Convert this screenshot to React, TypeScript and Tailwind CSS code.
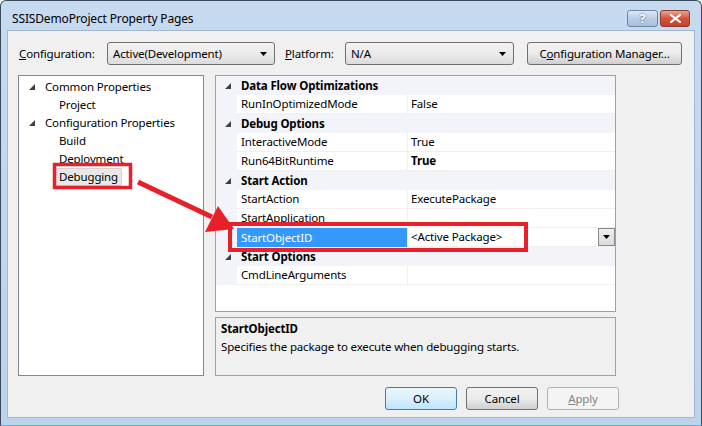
import React from 'react'

type Row =
  | { cat: string }
  | { name: string; value: string; bold?: boolean; selected?: boolean }

const rows: Row[] = [
  { cat: 'Data Flow Optimizations' },
  { name: 'RunInOptimizedMode', value: 'False' },
  { cat: 'Debug Options' },
  { name: 'InteractiveMode', value: 'True' },
  { name: 'Run64BitRuntime', value: 'True', bold: true },
  { cat: 'Start Action' },
  { name: 'StartAction', value: 'ExecutePackage' },
  { name: 'StartApplication', value: '' },
  { name: 'StartObjectID', value: '<Active Package>', selected: true },
  { cat: 'Start Options' },
  { name: 'CmdLineArguments', value: '' },
]

function Expander() {
  return (
    <svg width="6" height="6" viewBox="0 0 6 6" className="shrink-0">
      <path d="M6 0 L6 6 L0 6 Z" fill="#404040" />
    </svg>
  )
}

function DropArrow() {
  return (
    <svg width="7" height="4" viewBox="0 0 7 4">
      <path d="M0 0 L7 0 L3.5 4 Z" fill="#000" />
    </svg>
  )
}

function Combo({ value, width }: { value: string; width: string }) {
  return (
    <div
      className={`${width} h-[23px] flex items-center justify-between pl-[5px] pr-[7px] rounded-[3px] border border-[#707070] bg-gradient-to-b from-[#f2f2f2] via-[#ebebeb] to-[#dcdcdc]`}
    >
      <span>{value}</span>
      <DropArrow />
    </div>
  )
}

function TreeItem({ label, level, expander, selected }: { label: string; level: number; expander?: boolean; selected?: boolean }) {
  return (
    <div className={`h-[18px] flex items-center ${level === 0 ? 'pl-[10px]' : 'pl-[40px]'}`}>
      {level === 0 && (
        <span className="w-[16px] flex items-center">{expander && <Expander />}</span>
      )}
      <span
        className={
          selected
            ? 'px-[3px] -ml-[4px] h-[18px] leading-[16px] bg-[#e8e8e8] border border-[#d2d2d2] rounded-[2px]'
            : ''
        }
      >
        {label}
      </span>
    </div>
  )
}

function PropertyGrid() {
  return (
    <div className="h-[237px] border border-[#a0a0a0] bg-white flex flex-col">
      {rows.map((r, i) =>
        'cat' in r ? (
          <div key={i} className="h-[19px] flex items-center bg-[#f2f4f9]">
            <span className="w-[21px] flex justify-center pl-[2px]">
              <Expander />
            </span>
            <span className="pl-[4px] font-bold">{r.cat}</span>
          </div>
        ) : (
          <div key={i} className="h-[19px] flex">
            <span className="w-[21px] bg-[#f2f4f9]" />
            <span
              className={`w-[171px] pl-[4px] flex items-center border-r border-[#f0f0f0] ${
                r.selected ? 'bg-[#3399ff] text-white' : 'border-b'
              }`}
            >
              {r.name}
            </span>
            <span className="flex-1 flex items-center justify-between pl-[3px] border-b border-[#f0f0f0]">
              <span className={r.bold ? 'font-bold' : ''}>{r.value}</span>
              {r.selected && (
                <span className="w-[17px] h-[18px] flex items-center justify-center border border-[#8a8a8a] bg-gradient-to-b from-[#f0f0f0] to-[#dadada]">
                  <DropArrow />
                </span>
              )}
            </span>
          </div>
        ),
      )}
    </div>
  )
}

function Button({ children, variant }: { children: React.ReactNode; variant?: 'default' | 'disabled' }) {
  const cls =
    variant === 'default'
      ? 'border-[#3c7fb1] bg-gradient-to-b from-[#eaf6fd] via-[#d9f0fc] to-[#bee6fd]'
      : variant === 'disabled'
        ? 'border-[#adb2b5] bg-[#f4f4f4] text-[#838383]'
        : 'border-[#707070] bg-gradient-to-b from-[#f2f2f2] via-[#ebebeb] to-[#cfcfcf]'
  return (
    <div className={`w-[72px] h-[23px] flex items-center justify-center rounded-[3px] border ${cls}`}>
      {children}
    </div>
  )
}

export default function App() {
  return (
    <div className="relative w-[702px] h-[426px] text-[11.5px] tracking-[-0.15px] text-black font-['Noto_Sans',sans-serif] overflow-hidden">
      {/* Window frame */}
      <div className="w-full h-full flex flex-col rounded-t-[6px] border border-[#3a4a5c] bg-gradient-to-b from-[#c6daf0] to-[#bcd3ec] border-b-[#2fc6e0]">
        {/* Title bar */}
        <div className="h-[29px] flex items-start justify-between pl-[11px] pr-[11px]">
          <span className="mt-[10px] leading-[16px] text-[12px]">SSISDemoProject Property Pages</span>
          <div className="flex gap-[2px] mt-[9px]">
            <div className="w-[31px] h-[17px] flex items-center justify-center rounded-[3px] border border-[#6d84a3] bg-gradient-to-b from-[#dfe9f5] via-[#b9cde6] to-[#a8c0de] text-white font-bold text-[12px] leading-none [text-shadow:0_0_2px_#3a4f6e]">
              ?
            </div>
            <div className="w-[30px] h-[17px] flex items-center justify-center rounded-[3px] border border-[#8c3b31] bg-gradient-to-b from-[#e8a493] via-[#d2533c] to-[#c6412b]">
              <svg width="11" height="9" viewBox="0 0 11 9">
                <path d="M1 1 L10 8 M10 1 L1 8" stroke="#fff" strokeWidth="2.2" strokeLinecap="square" />
              </svg>
            </div>
          </div>
        </div>

        {/* Client area */}
        <div className="mx-[6px] h-[388px] border border-[#a3b8d0] bg-[#f0f0f0] px-[10px] flex flex-col">
          {/* Configuration row */}
          <div className="mt-[11px] h-[23px] flex items-center">
            <span className="w-[89px] pl-[1px]">
              <span className="underline">C</span>onfiguration:
            </span>
            <Combo value="Active(Development)" width="w-[168px]" />
            <span className="ml-[10px] w-[60px]">
              <span className="underline">P</span>latform:
            </span>
            <Combo value="N/A" width="w-[169px]" />
            <div className="ml-[13px] w-[155px] h-[23px] flex items-center justify-center rounded-[3px] border border-[#707070] bg-gradient-to-b from-[#f2f2f2] via-[#ebebeb] to-[#cfcfcf]">
              C<span className="underline">o</span>nfiguration Manager...
            </div>
          </div>

          {/* Main */}
          <div className="mt-[10px] h-[301px] flex gap-[11px]">
            <div className="w-[186px] border border-[#828790] bg-white pt-[2px]">
              <TreeItem label="Common Properties" level={0} expander />
              <TreeItem label="Project" level={1} />
              <TreeItem label="Configuration Properties" level={0} expander />
              <TreeItem label="Build" level={1} />
              <TreeItem label="Deployment" level={1} />
              <TreeItem label="Debugging" level={1} selected />
            </div>
            <div className="w-[401px] flex flex-col gap-[5px]">
              <PropertyGrid />
              <div className="flex-1 border border-[#a0a0a0] px-[5px] pt-[2px]">
                <div className="font-bold leading-[18px]">StartObjectID</div>
                <div className="leading-[18px]">Specifies the package to execute when debugging starts.</div>
              </div>
            </div>
          </div>

          {/* Buttons */}
          <div className="mt-[11px] ml-[367px] flex gap-[9px]">
            <Button variant="default">OK</Button>
            <Button>Cancel</Button>
            <Button variant="disabled">
              <span className="underline">A</span>pply
            </Button>
          </div>
        </div>
      </div>

      {/* Red annotations */}
      <svg className="absolute left-0 top-0 pointer-events-none" width="702" height="426" viewBox="0 0 702 426">
        <rect x="54.5" y="164.5" width="76" height="23" fill="none" stroke="#e8202a" strokeWidth="3.5" />
        <rect x="230" y="224" width="296" height="26" fill="none" stroke="#e8202a" strokeWidth="4" />
        <line x1="138" y1="182" x2="212" y2="217" stroke="#e8202a" strokeWidth="5" />
        <path d="M234 229 L205 232 L218 206 Z" fill="#e8202a" />
      </svg>
    </div>
  )
}
